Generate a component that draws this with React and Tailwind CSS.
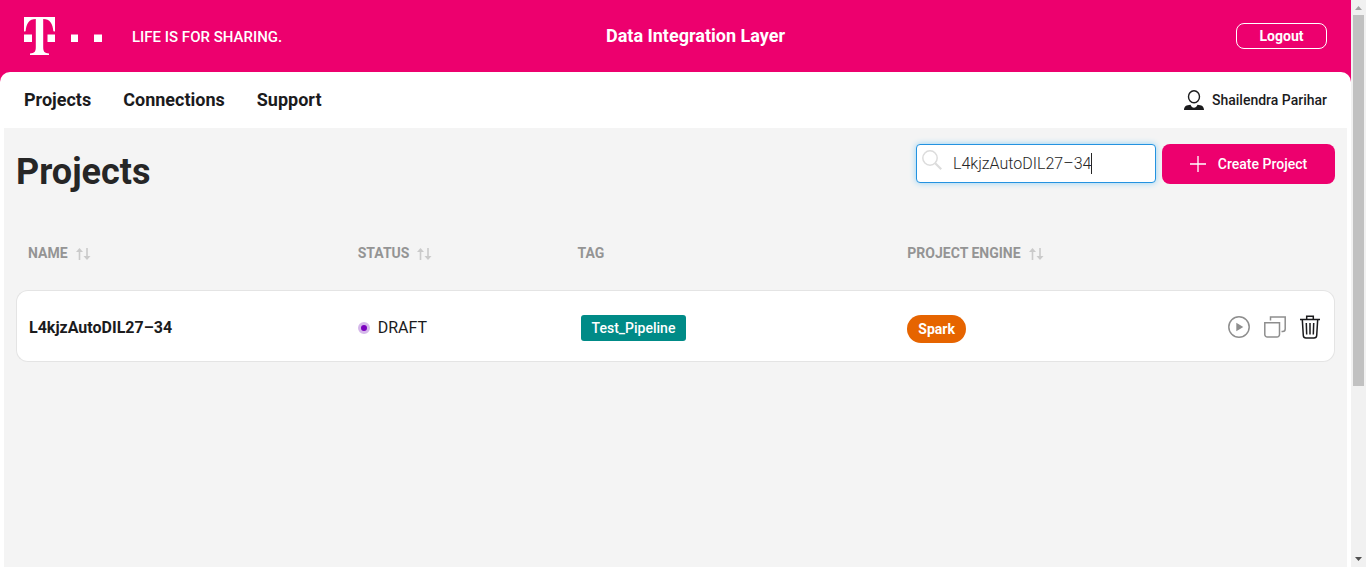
import React, { useState } from "react";

function BrandLogo() {
  return (
    <svg width="80" height="38" viewBox="0 0 80 38" fill="#fff" aria-hidden="true">
      <path d="M0 0H31V14.500L29.400 14.200C28.600 6.500 26 2 19.200 2V30C19.200 34.800 20.500 36.200 25 36.400V38H6V36.400C10.500 36.200 11.800 34.800 11.800 30V2C5 2 2.400 6.500 1.600 14.200L0 14.500Z" />
      <path d="M0 17.500H8V25H0ZM23.500 17.500H31V25H23.500ZM47 17.500H54V25H47ZM70 17.500H78V25H70Z" />
    </svg>
  );
}

function UserIcon() {
  return (
    <svg width="20" height="20" viewBox="0 0 20 20" fill="none" aria-hidden="true">
      <ellipse cx="10" cy="6.700" rx="5.500" ry="6" stroke="#1b1b1d" strokeWidth="1.400" />
      <path d="M0 20C0 16.500 2.500 15 6.500 14.800C7.200 16.800 8.600 17.700 10 17.700C11.400 17.700 12.800 16.800 13.500 14.800C17.500 15 20 16.500 20 20Z" fill="#1b1b1d" />
    </svg>
  );
}

function SortIcon() {
  return (
    <svg width="15" height="12" viewBox="0 0 15 12" fill="#cacaca" aria-hidden="true">
      <path d="M3.500 0L7 4H4.300V12H2.700V4H0ZM11 12L7.500 8H10.200V0H11.800V8H14.500Z" />
    </svg>
  );
}

function SearchIcon() {
  return (
    <svg width="20" height="20" viewBox="0 0 20 20" fill="none" stroke="#dcdcdc" aria-hidden="true">
      <circle cx="8" cy="8" r="7.200" strokeWidth="1.500" />
      <path d="M13.200 13.200L19.200 19.200" strokeWidth="2.200" />
    </svg>
  );
}

function PlayIcon() {
  return (
    <svg width="22" height="22" viewBox="0 0 22 22" fill="none" aria-hidden="true">
      <circle cx="11" cy="11" r="10.200" stroke="#8e8e8e" strokeWidth="1.500" />
      <path d="M8.300 6.700L15.300 11L8.300 15.300Z" fill="#8e8e8e" />
    </svg>
  );
}

function CopyIcon() {
  return (
    <svg width="22" height="22" viewBox="0 0 22 22" fill="none" stroke="#8e8e8e" strokeWidth="1.500" aria-hidden="true">
      <path d="M.8 6.700H15.500V18.500A2.500 2.500 0 0 1 13 21H3.300A2.500 2.500 0 0 1 .8 18.500Z" />
      <path d="M6.500 4.500V1H21.200V13C21.200 14.500 20.200 15.500 18.700 15.500H17.500" />
    </svg>
  );
}

function TrashIcon() {
  return (
    <svg width="20" height="24" viewBox="0 0 20 24" fill="none" stroke="#1b1b1d" strokeWidth="1.500" aria-hidden="true">
      <path d="M0 4.500H20M6.700 4.500V1.200H13.300V4.500" />
      <path d="M2.300 4.500L3.300 20.500Q3.500 23 6 23H14Q16.500 23 16.700 20.500L17.700 4.500" />
      <path d="M6.300 8L6.700 19.500M10 8V19.500M13.700 8L13.300 19.500" />
    </svg>
  );
}

function Scrollbar() {
  return (
    <div className="flex w-[15px] shrink-0 flex-col items-center bg-[#f1f1f1]" aria-hidden="true">
      <svg className="shrink-0" width="15" height="15" viewBox="0 0 15 15" fill="#a3a3a3">
        <path d="M7.500 6L11 10H4Z" />
      </svg>
      <div className="w-[11px] flex-[69] bg-[#c1c1c1]" />
      <div className="flex-[31]" />
      <svg className="shrink-0" width="15" height="15" viewBox="0 0 15 15" fill="#505050">
        <path d="M4 5H11L7.500 9Z" />
      </svg>
    </div>
  );
}

function HeaderCell({ className, label, sortable }) {
  return (
    <th scope="col" className={"px-3 pt-4 text-left align-middle font-bold " + className}>
      <span className="flex items-center gap-2">
        {label}
        {sortable && (
          <button type="button" aria-label={"Sort by " + label} className="pt-0.5">
            <SortIcon />
          </button>
        )}
      </span>
    </th>
  );
}

export default function App() {
  const [query, setQuery] = useState("L4kjzAutoDIL27–34");
  const cell = "border-y border-[#e4e4e4] bg-white px-3 pt-1 ";
  return (
    <div className="flex h-screen overflow-hidden bg-white font-['Roboto',sans-serif] text-[#1b1b1d]">
      <div className="flex min-w-0 flex-1 flex-col">
        <div className="bg-[#ed006e]">
          <header className="grid h-[72px] grid-cols-3 items-center px-6 text-white">
            <a href="#home" aria-label="Home" className="flex items-center gap-7">
              <BrandLogo />
              <span className="pt-0.5 text-[15px] font-medium">LIFE IS FOR SHARING.</span>
            </a>
            <span className="pl-10 text-center text-lg font-bold">Data Integration Layer</span>
            <button type="button" className="h-[26px] w-[91px] justify-self-end rounded-lg border border-white text-sm font-bold">
              Logout
            </button>
          </header>
          <nav className="flex h-14 items-center justify-between rounded-t-[10px] bg-white px-6">
            <div className="flex gap-8 text-lg font-bold">
              <a href="#projects">Projects</a>
              <a href="#connections">Connections</a>
              <a href="#support">Support</a>
            </div>
            <a href="#account" className="flex items-center gap-2 text-sm font-medium">
              <UserIcon />
              Shailendra Parihar
            </a>
          </nav>
        </div>

        <main className="mx-1 flex-1 bg-[#f4f4f4] px-3 pt-4">
          <div className="flex h-14 items-start justify-between">
            <h1 className="pt-1 text-4xl leading-[48px] font-bold text-[#262626]">Projects</h1>
            <div className="flex gap-1.5">
              <label className="relative flex h-[39px] w-60 items-center rounded border border-[#2392e0] bg-white shadow-[0_0_6px_#8fd0f5]">
                <span className="absolute top-[5px] left-[5px]">
                  <SearchIcon />
                </span>
                <input
                  type="text"
                  aria-label="Search projects"
                  value={query}
                  onChange={(e) => setQuery(e.target.value)}
                  className="w-full bg-transparent pl-9 text-base font-light text-[#262626] caret-transparent outline-none"
                />
                <span className="absolute top-2 left-[174px] h-[21px] w-px bg-[#262626]" />
              </label>
              <button type="button" className="flex h-10 w-[173px] items-center justify-center gap-3 rounded-lg bg-[#ed006e] text-sm font-medium text-white">
                <svg width="16" height="16" viewBox="0 0 16 16" stroke="#fff" strokeWidth="1.300" aria-hidden="true">
                  <path d="M8 0V16M0 8H16" />
                </svg>
                Create Project
              </button>
            </div>
          </div>

          <table className="w-full table-fixed border-separate border-spacing-0">
            <thead>
              <tr className="h-[90px] text-sm text-[#949494]">
                <HeaderCell className="w-1/4" label="NAME" sortable />
                <HeaderCell className="w-1/6" label="STATUS" sortable />
                <HeaderCell className="w-1/4" label="TAG" />
                <HeaderCell className="w-1/4" label="PROJECT ENGINE" sortable />
                <th scope="col" aria-label="Actions" className="w-1/12" />
              </tr>
            </thead>
            <tbody>
              <tr className="h-[72px]">
                <td className={cell + "rounded-l-xl border-l text-base font-bold"}>L4kjzAutoDIL27–34</td>
                <td className={cell + "text-base"}>
                  <span className="flex items-center gap-2">
                    <span className="size-3 rounded-full border-[3px] border-[#d5b8ea] bg-[#7a00be]" />
                    DRAFT
                  </span>
                </td>
                <td className={cell + "pl-[15px]"}>
                  <span className="flex h-[26px] w-fit items-center rounded-[3px] bg-[#008b87] px-[11px] text-sm font-medium text-white">
                    Test_Pipeline
                  </span>
                </td>
                <td className={cell}>
                  <span className="mt-0.5 flex h-7 w-fit items-center rounded-full bg-[#e66400] px-[11px] text-sm font-bold text-white">
                    Spark
                  </span>
                </td>
                <td className="rounded-r-xl border-y border-r border-[#e4e4e4] bg-white pt-0.5 pr-3.5">
                  <span className="flex items-center justify-end gap-[14px]">
                    <button type="button" aria-label="Run project">
                      <PlayIcon />
                    </button>
                    <button type="button" aria-label="Duplicate project">
                      <CopyIcon />
                    </button>
                    <button type="button" aria-label="Delete project">
                      <TrashIcon />
                    </button>
                  </span>
                </td>
              </tr>
            </tbody>
          </table>
        </main>
      </div>
      <Scrollbar />
    </div>
  );
}
